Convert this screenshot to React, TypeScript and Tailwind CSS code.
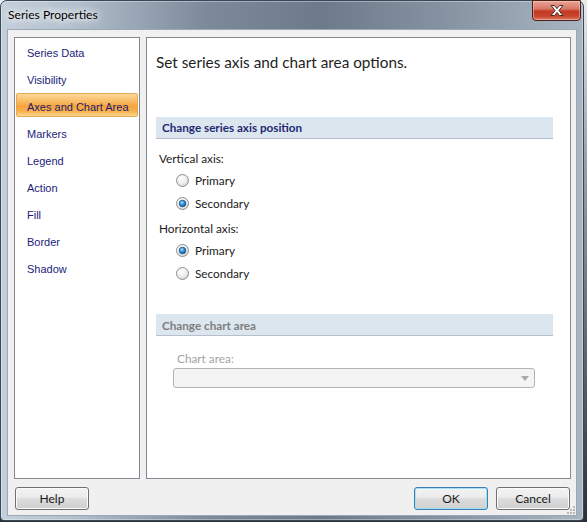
import React from "react";

function Radio({ checked }: { checked?: boolean }) {
  return (
    <svg width="13" height="13" viewBox="0 0 13 13" className="shrink-0">
      <defs>
        <radialGradient id="rg-off" cx="0.4" cy="0.35" r="0.7">
          <stop offset="0" stopColor="#ffffff" />
          <stop offset="0.6" stopColor="#ececec" />
          <stop offset="1" stopColor="#cfcfcf" />
        </radialGradient>
        <radialGradient id="rg-on" cx="0.4" cy="0.35" r="0.7">
          <stop offset="0" stopColor="#a8e2ff" />
          <stop offset="0.5" stopColor="#2f8fd8" />
          <stop offset="1" stopColor="#0f4f96" />
        </radialGradient>
      </defs>
      <circle cx="6.5" cy="6.5" r="6" fill="url(#rg-off)" stroke="#8e8f8f" strokeWidth="1" />
      {checked && <circle cx="6.5" cy="6.5" r="3.3" fill="url(#rg-on)" stroke="#1c4f84" strokeWidth="0.8" />}
    </svg>
  );
}

function RadioRow({ label, checked }: { label: string; checked?: boolean }) {
  return (
    <div className="h-[23px] flex items-center ml-[20px] gap-[6px]">
      <Radio checked={checked} />
      <span className="text-[11.8px] text-[#1a1a1a] pt-[1px]">{label}</span>
    </div>
  );
}

function Button({ label, primary }: { label: string; primary?: boolean }) {
  return (
    <div
      className={
        "w-[74px] h-[23px] rounded-[3px] border flex items-center justify-center text-[12px] text-[#1a1a1a] bg-[linear-gradient(to_bottom,#f4f4f4_0%,#ebebeb_45%,#dddddd_50%,#cfcfcf_100%)] " +
        (primary
          ? "border-[#3c7fb1] shadow-[inset_0_0_0_1px_#a6e0f8]"
          : "border-[#707070] shadow-[inset_0_0_0_1px_#fbfbfb]")
      }
    >
      {label}
    </div>
  );
}

const items = [
  "Series Data",
  "Visibility",
  "Axes and Chart Area",
  "Markers",
  "Legend",
  "Action",
  "Fill",
  "Border",
  "Shadow",
];

export default function App() {
  return (
    <div className="w-[587px] h-[522px] bg-[linear-gradient(to_bottom,#e8eaec_0%,#9aa2ac_30%,#5a6270_70%,#2c3036_100%)] font-['Lato',sans-serif]">
      <div className="w-[584px] h-[521px] rounded-t-[7px] rounded-b-[4px] border border-[#3a4756] bg-[linear-gradient(to_right,#c3cfdb_0%,#b3c0cd_12%,#7c8a9b_35%,#6c7a8b_55%,#8391a0_75%,#a9b5c1_100%)] flex flex-col relative shadow-[inset_0_0_0_1px_rgba(255,255,255,0.35)]">
        {/* title bar */}
        <div className="h-[28px] flex items-center pl-[7px] relative">
          <span className="text-[12.1px] text-black [text-shadow:0_0_6px_#ffffff,0_0_10px_#ffffff,0_0_14px_#ffffff]">
            Series Properties
          </span>
          <div className="absolute right-[2px] top-[-1px] w-[49px] h-[21px] rounded-b-[4px] border border-[#4a2018] bg-[linear-gradient(to_bottom,#e9a596_0%,#d77a68_40%,#c33a22_55%,#c8452e_80%,#dc7c66_100%)] flex items-center justify-center shadow-[inset_0_0_0_1px_rgba(255,220,210,0.45)]">
            <svg width="16" height="13" viewBox="0 0 16 13">
              <path
                d="M2 1.5 H5.5 L8 4.6 L10.5 1.5 H14 L9.9 6.5 L14 11.5 H10.5 L8 8.4 L5.5 11.5 H2 L6.1 6.5 Z"
                fill="#ffffff"
                stroke="#4a2a26"
                strokeWidth="1"
                strokeLinejoin="round"
              />
            </svg>
          </div>
        </div>
        {/* client */}
        <div className="flex-1 mx-[6px] mb-[4px] bg-[#f0f0f0] border border-[#9aa7b5] flex flex-col relative">
          <div className="flex gap-[6px] pl-[6px] pr-[5px] pt-[7px] h-[449px]">
            {/* left list */}
            <div className="w-[126px] h-full bg-white border border-[#828790] pt-[1px] px-[1px] flex flex-col gap-[3px] font-['Liberation_Sans',sans-serif]">
              {items.map((it) =>
                it === "Axes and Chart Area" ? (
                  <div
                    key={it}
                    className="h-[24px] rounded-[2px] border border-[#e3a957] bg-[linear-gradient(to_bottom,#fcd79a_0%,#f9bb63_35%,#f6a23c_55%,#f8b250_80%,#fdd991_100%)] flex items-center pt-[4px] pl-[10px] text-[11px] text-[#1c1c6e]"
                  >
                    {it}
                  </div>
                ) : (
                  <div key={it} className="h-[24px] border border-transparent flex items-center pt-[4px] pl-[10px] text-[11px] text-[#1c1c7a]">
                    {it}
                  </div>
                )
              )}
            </div>
            {/* right panel */}
            <div className="flex-1 h-full bg-white border border-[#828790] pl-[9px] pr-[17px]">
              <div className="mt-[14px] h-[20px] leading-[20px] text-[15.3px] text-[#1e1e1e]">
                Set series axis and chart area options.
              </div>
              <div className="mt-[45px] h-[22px] bg-[#dce6ee] border-b border-[#b7c0c8] flex items-center pt-[1px] pl-[6px] text-[11.7px] font-bold text-[#1f2a74]">
                Change series axis position
              </div>
              <div className="mt-[12px] ml-[3px] h-[16px] leading-[16px] text-[11.8px] text-[#1a1a1a]">Vertical axis:</div>
              <div className="mt-[2px]">
                <RadioRow label="Primary" />
                <RadioRow label="Secondary" checked />
              </div>
              <div className="mt-[6px] ml-[3px] h-[16px] leading-[16px] text-[11.8px] text-[#1a1a1a]">Horizontal axis:</div>
              <div className="mt-[2px]">
                <RadioRow label="Primary" checked />
                <RadioRow label="Secondary" />
              </div>
              <div className="mt-[29px] h-[22px] bg-[#dce6ee] border-b border-[#b7c0c8] flex items-center pt-[2px] pl-[6px] text-[11.7px] font-bold text-[#7d7d7d]">
                Change chart area
              </div>
              <div className="mt-[15px] ml-[21px] h-[16px] leading-[16px] text-[11.8px] text-[#a3a3a3]">Chart area:</div>
              <div className="mt-[1px] ml-[17px] w-[362px] h-[20px] rounded-[3px] border border-[#b3b3b3] bg-[#f4f4f4] flex items-center justify-end pr-[5px]">
                <svg width="8" height="5" viewBox="0 0 8 5">
                  <path d="M0 0 H8 L4 5 Z" fill="#a8a8a8" />
                </svg>
              </div>
            </div>
          </div>
          {/* buttons */}
          <div className="flex items-center mt-[8px] pl-[7px] pr-[6px]">
            <Button label="Help" />
            <div className="flex-1" />
            <div className="flex gap-[8px]">
              <Button label="OK" primary />
              <Button label="Cancel" />
            </div>
          </div>
          <div className="absolute right-[1px] bottom-[1px]">
            <svg width="8" height="8" viewBox="0 0 8 8">
              <g fill="#b8b8b8">
                <rect x="6" y="0" width="2" height="2" />
                <rect x="3" y="3" width="2" height="2" />
                <rect x="6" y="3" width="2" height="2" />
                <rect x="0" y="6" width="2" height="2" />
                <rect x="3" y="6" width="2" height="2" />
                <rect x="6" y="6" width="2" height="2" />
              </g>
            </svg>
          </div>
        </div>
      </div>
    </div>
  );
}
